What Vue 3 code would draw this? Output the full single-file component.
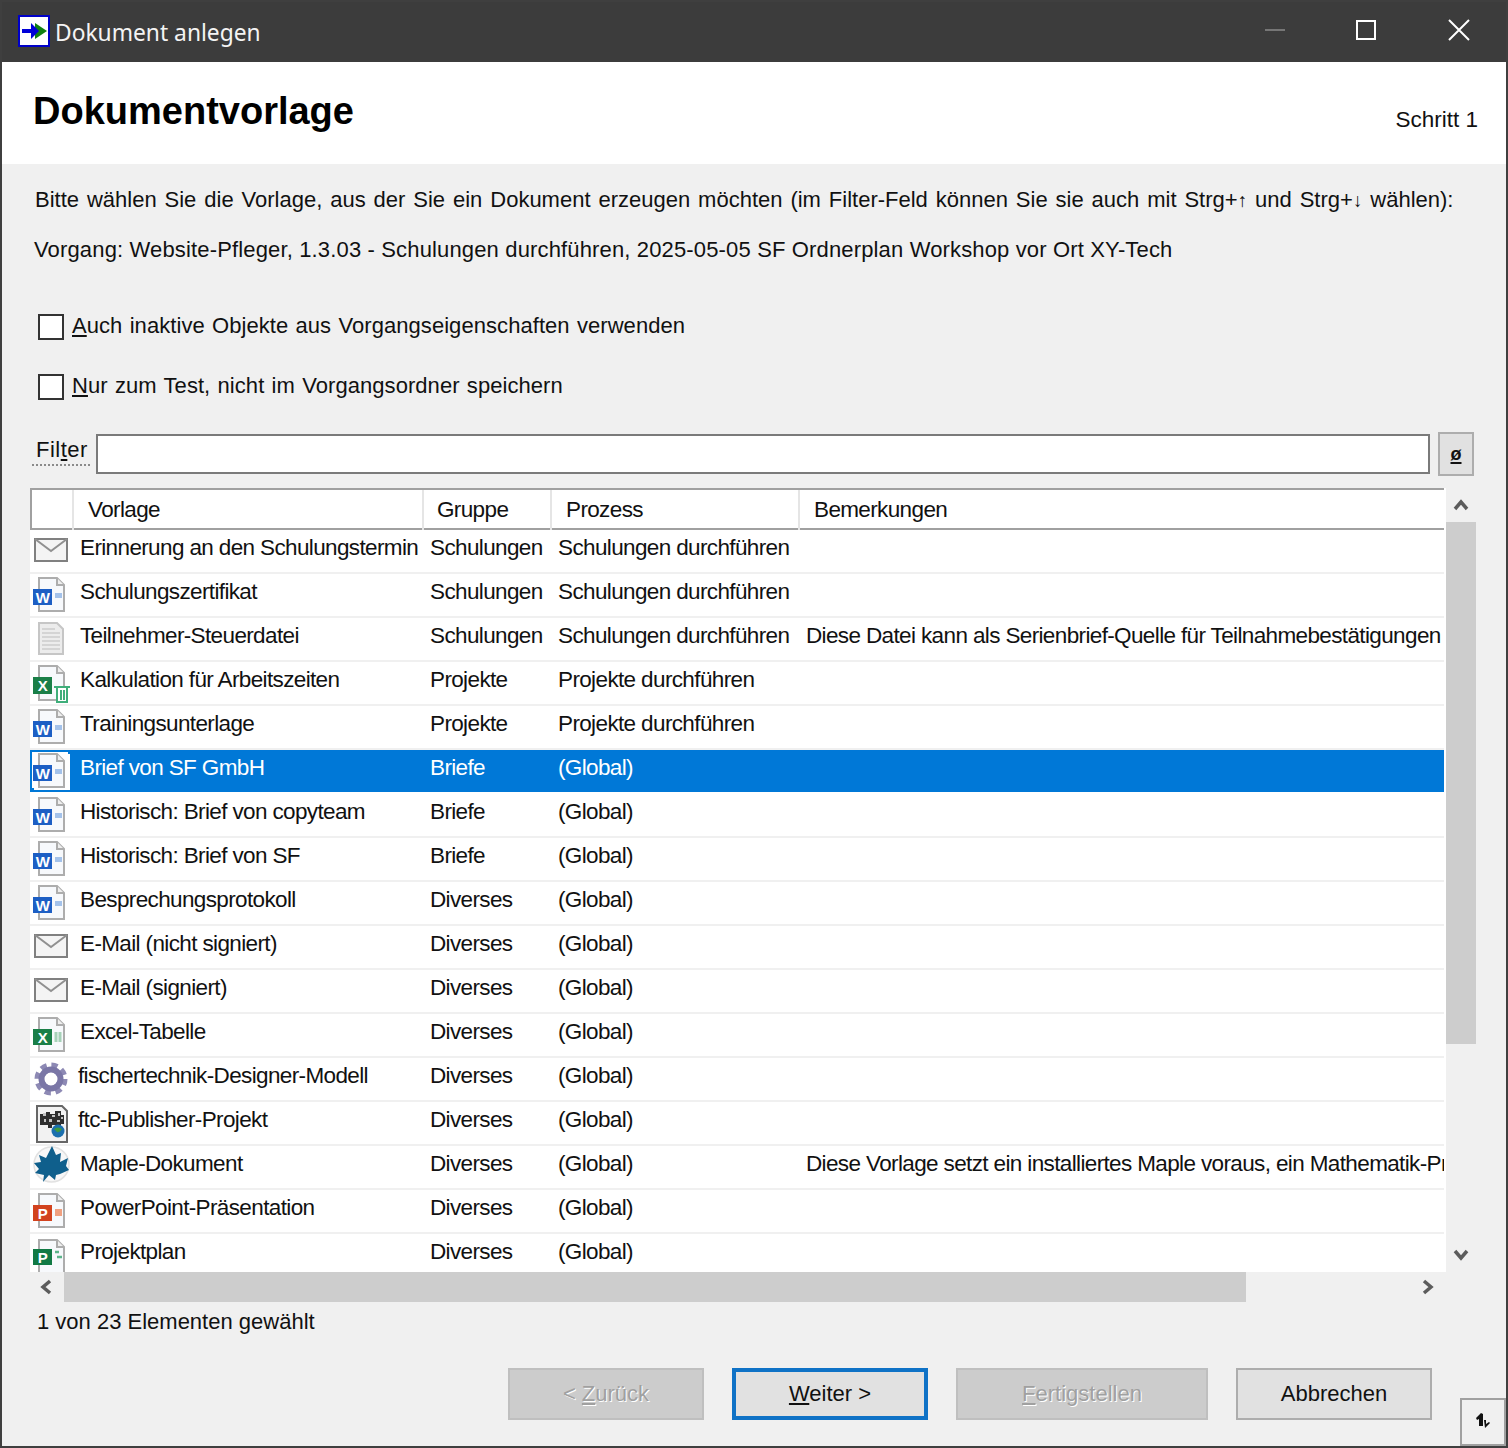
<script setup>
const rows = [
  { icon: 'mail', name: 'Erinnerung an den Schulungstermin', group: 'Schulungen', proc: 'Schulungen durchführen', note: '' },
  { icon: 'word', name: 'Schulungszertifikat', group: 'Schulungen', proc: 'Schulungen durchführen', note: '' },
  { icon: 'plain', name: 'Teilnehmer-Steuerdatei', group: 'Schulungen', proc: 'Schulungen durchführen', note: 'Diese Datei kann als Serienbrief-Quelle für Teilnahmebestätigungen' },
  { icon: 'exceltrash', name: 'Kalkulation für Arbeitszeiten', group: 'Projekte', proc: 'Projekte durchführen', note: '' },
  { icon: 'word', name: 'Trainingsunterlage', group: 'Projekte', proc: 'Projekte durchführen', note: '' },
  { icon: 'word', name: 'Brief von SF GmbH', group: 'Briefe', proc: '(Global)', note: '', selected: true },
  { icon: 'word', name: 'Historisch: Brief von copyteam', group: 'Briefe', proc: '(Global)', note: '' },
  { icon: 'word', name: 'Historisch: Brief von SF', group: 'Briefe', proc: '(Global)', note: '' },
  { icon: 'word', name: 'Besprechungsprotokoll', group: 'Diverses', proc: '(Global)', note: '' },
  { icon: 'mail', name: 'E-Mail (nicht signiert)', group: 'Diverses', proc: '(Global)', note: '' },
  { icon: 'mail', name: 'E-Mail (signiert)', group: 'Diverses', proc: '(Global)', note: '' },
  { icon: 'excel', name: 'Excel-Tabelle', group: 'Diverses', proc: '(Global)', note: '' },
  { icon: 'gear', name: 'fischertechnik-Designer-Modell', group: 'Diverses', proc: '(Global)', note: '', shift: true },
  { icon: 'ftc', name: 'ftc-Publisher-Projekt', group: 'Diverses', proc: '(Global)', note: '', shift: true },
  { icon: 'maple', name: 'Maple-Dokument', group: 'Diverses', proc: '(Global)', note: 'Diese Vorlage setzt ein installiertes Maple voraus, ein Mathematik-Programm' },
  { icon: 'ppt', name: 'PowerPoint-Präsentation', group: 'Diverses', proc: '(Global)', note: '' },
  { icon: 'project', name: 'Projektplan', group: 'Diverses', proc: '(Global)', note: '' }
]
</script>

<template>
  <div class="window">
    <svg class="defs" aria-hidden="true">
      <symbol id="page" viewBox="0 0 36 36">
        <path d="M7 2H25L32 9V35H7Z" fill="#f7f9fc" stroke="#adadad" stroke-width="2" />
        <path d="M25 2V9H32" fill="#eeeeee" stroke="#adadad" stroke-width="2" />
      </symbol>
      <symbol id="word" viewBox="0 0 36 36">
        <use href="#page" width="36" height="36" />
        <rect x="1" y="13" width="19" height="16" fill="#1d5fc4" />
        <text x="10.5" y="27" class="ico-letter" text-anchor="middle">W</text>
        <rect x="23" y="17" width="7" height="5" fill="#a4c2ea" />
      </symbol>
      <symbol id="excel" viewBox="0 0 36 36">
        <use href="#page" width="36" height="36" />
        <rect x="1" y="13" width="19" height="16" fill="#1a7f48" />
        <text x="10.5" y="27" class="ico-letter" text-anchor="middle">X</text>
        <path d="M24 16v10M28 16v10" stroke="#a6d2b8" stroke-width="3" />
      </symbol>
      <symbol id="exceltrash" viewBox="0 0 40 40">
        <path d="M7 2H25L32 9V36H7Z" fill="#f7f9fc" stroke="#adadad" stroke-width="2" />
        <path d="M25 2V9H32" fill="#eeeeee" stroke="#adadad" stroke-width="2" />
        <rect x="1" y="13" width="19" height="17" fill="#1a7f48" />
        <text x="10.5" y="27" class="ico-letter" text-anchor="middle">X</text>
        <path d="M22 23H38M25 24V38H35V24M29 26V36M32 26V36" fill="#fff" stroke="#3fae7a" stroke-width="2" />
      </symbol>
      <symbol id="ppt" viewBox="0 0 36 36">
        <use href="#page" width="36" height="36" />
        <rect x="1" y="13" width="19" height="16" fill="#d2431f" />
        <text x="10.5" y="27" class="ico-letter" text-anchor="middle">P</text>
        <rect x="23" y="17" width="7" height="7" fill="#f0a080" />
      </symbol>
      <symbol id="project" viewBox="0 0 36 36">
        <use href="#page" width="36" height="40" />
        <rect x="1" y="13" width="19" height="16" fill="#117a45" />
        <text x="10.5" y="27" class="ico-letter" text-anchor="middle">P</text>
        <path d="M23 16h4M25 21h5" stroke="#5cb58a" stroke-width="2.5" />
      </symbol>
      <symbol id="mail" viewBox="0 0 36 36">
        <rect x="3" y="7" width="32" height="22" fill="#f4f4f4" stroke="#808080" stroke-width="2" />
        <path d="M3 7L19 19L35 7" fill="none" stroke="#909090" stroke-width="2" />
      </symbol>
      <symbol id="plain" viewBox="0 0 36 36">
        <path d="M7 3H25L31 9V34H7Z" fill="#ececec" stroke="#c6c6c6" stroke-width="2" />
        <path d="M10 9H23M10 13H28M10 17H28M10 21H28M10 25H28M10 29H28" stroke="#d4d4d4" stroke-width="2" />
      </symbol>
      <symbol id="gear" viewBox="0 0 36 36">
        <circle cx="19" cy="19" r="13.5" fill="none" stroke="#8d89b4" stroke-width="6" stroke-dasharray="6 4.6" />
        <circle cx="19" cy="19" r="9.5" fill="none" stroke="#7a76a6" stroke-width="6" />
        <circle cx="19" cy="19" r="6" fill="#fff" />
      </symbol>
      <symbol id="ftc" viewBox="0 0 40 40">
        <path d="M5 2H30L35 7V38H5Z" fill="#f2f2f2" stroke="#666" stroke-width="2" />
        <path d="M8 10h6v-2h4v2h5v-3h6v4h3v9h-3v3h-5v-2h-4v3h-4v-3H8Z" fill="#2e2e2e" />
        <path d="M11 9h3v3h-3ZM20 11h3v2h-3ZM26 9h2v3h-2ZM12 15h2v3h-2ZM17 15h3v3h-3ZM25 16h3v2h-3ZM29 13h2v2h-2Z" fill="#c4c4c4" />
        <circle cx="26" cy="27" r="6.5" fill="#1b6fae" />
        <path d="M22 25q4-3 8 0q-2 4-5 3Z" fill="#3e9a40" />
      </symbol>
      <symbol id="maple" viewBox="0 0 40 40">
        <circle cx="19.5" cy="18.5" r="17.5" fill="#f7f7f7" stroke="#e2e2e2" stroke-width="1.5" />
        <path transform="translate(0 -2)" d="M20 2L24 11L29 9L28 18L36 14L34 22L37 26L28 30L24 31L23 36L17 31L11 38L12 31L3 29L7 25L2 19L9 18L7 11L14 14Z" fill="#0f5f8c" />
      </symbol>
    </svg>

    <div class="titlebar">
      <svg class="app-icon" viewBox="0 0 32 32" aria-hidden="true">
        <rect x="1" y="1" width="30" height="30" fill="#fff" stroke="#0000c8" stroke-width="2" />
        <path d="M17 8L29 16L17 24Z" fill="#108010" />
        <path d="M4 14H13V8L21 16L13 24V18H4Z" fill="#0000d8" />
      </svg>
      <div class="title">Dokument anlegen</div>
      <div class="controls">
        <div class="ctrl"><span class="min"></span></div>
        <div class="ctrl"><span class="max"></span></div>
        <div class="ctrl">
          <svg width="22" height="22" viewBox="0 0 22 22" aria-hidden="true"><path d="M1 1L21 21M21 1L1 21" stroke="#fff" stroke-width="2" /></svg>
        </div>
      </div>
    </div>

    <header class="head">
      <h1>Dokumentvorlage</h1>
      <div class="step">Schritt 1</div>
    </header>

    <main class="content">
      <p class="line line1">Bitte wählen Sie die Vorlage, aus der Sie ein Dokument erzeugen möchten (im Filter-Feld können Sie sie auch mit Strg+<small>↑</small> und Strg+<small>↓</small> wählen):</p>
      <p class="line line2">Vorgang: Website-Pfleger, 1.3.03 - Schulungen durchführen, 2025-05-05 SF Ordnerplan Workshop vor Ort XY-Tech</p>

      <div class="checks">
        <label class="check"><span class="box"></span><span class="check-text"><u>A</u>uch inaktive Objekte aus Vorgangseigenschaften verwenden</span></label>
        <label class="check"><span class="box"></span><span class="check-text"><u>N</u>ur zum Test, nicht im Vorgangsordner speichern</span></label>
      </div>

      <div class="filter-row">
        <div class="filter-label">Fil<u>t</u>er</div>
        <div class="filter-input"></div>
        <div class="filter-btn"><u>ø</u></div>
      </div>

      <div class="list-area">
        <div class="list">
          <div class="head-grid list-head">
            <div class="hcell"></div>
            <div class="hcell">Vorlage</div>
            <div class="hcell second">Gruppe</div>
            <div class="hcell">Prozess</div>
            <div class="hcell last">Bemerkungen</div>
          </div>
          <div v-for="r in rows" :key="r.name" class="row-grid row" :class="{ selected: r.selected }">
            <div class="icon-cell">
              <svg class="row-icon" :class="r.icon" aria-hidden="true"><use :href="'#' + r.icon" width="100%" height="100%" /></svg>
            </div>
            <div class="cell name" :class="{ shift: r.shift }">{{ r.name }}</div>
            <div class="cell">{{ r.group }}</div>
            <div class="cell">{{ r.proc }}</div>
            <div class="cell">{{ r.note }}</div>
          </div>
        </div>
        <div class="vscroll">
          <div class="arrow-v">
            <svg width="16" height="12" viewBox="0 0 16 12" aria-hidden="true"><path d="M2 10L8 3L14 10" fill="none" stroke="#5c5c5c" stroke-width="3.5" /></svg>
          </div>
          <div class="vthumb"></div>
          <div class="grow"></div>
          <div class="arrow-v">
            <svg width="16" height="12" viewBox="0 0 16 12" aria-hidden="true"><path d="M2 2L8 9L14 2" fill="none" stroke="#5c5c5c" stroke-width="3.5" /></svg>
          </div>
        </div>
      </div>

      <div class="hscroll">
        <div class="arrow-h">
          <svg width="12" height="16" viewBox="0 0 12 16" aria-hidden="true"><path d="M10 2L3 8L10 14" fill="none" stroke="#5c5c5c" stroke-width="3.5" /></svg>
        </div>
        <div class="hthumb"></div>
        <div class="grow"></div>
        <div class="arrow-h">
          <svg width="12" height="16" viewBox="0 0 12 16" aria-hidden="true"><path d="M2 2L9 8L2 14" fill="none" stroke="#5c5c5c" stroke-width="3.5" /></svg>
        </div>
      </div>

      <div class="status">1 von 23 Elementen gewählt</div>

      <div class="footer">
        <div class="btn disabled"><span>&lt; <u>Z</u>urück</span></div>
        <div class="btn primary"><span><u>W</u>eiter &gt;</span></div>
        <div class="btn disabled wide"><span><u>F</u>ertigstellen</span></div>
        <div class="btn"><span>Abbrechen</span></div>
        <div class="corner">
          <svg width="18" height="18" viewBox="0 0 16 18" aria-hidden="true"><path d="M1 5L6 0L8 1V13H4V6L2 7ZM9 7H11V11L14 9L15 10L10 15Z" fill="#111" /></svg>
        </div>
      </div>
    </main>
  </div>
</template>

<style scoped>
.window {
  width: 1508px;
  height: 1448px;
  box-sizing: border-box;
  border: 2px solid #3f3f3f;
  display: flex;
  flex-direction: column;
  background: #f0f0f0;
  color: #111;
  font-family: "Liberation Sans", Arial, sans-serif;
  font-size: 22px;
  overflow: hidden;
}
.defs { display: block; width: 0; height: 0; }
.ico-letter { font-family: "Liberation Sans", Arial, sans-serif; font-size: 15px; font-weight: 700; fill: #fff; }
u { text-decoration-thickness: 2px; text-underline-offset: 2px; }

.titlebar {
  height: 60px;
  flex: none;
  display: flex;
  align-items: center;
  background: #3c3c3c;
  padding-left: 16px;
}
.app-icon { width: 32px; height: 32px; flex: none; margin-bottom: 2px; }
.title {
  margin-left: 5px;
  color: #f4f4f4;
  font-family: "Noto Sans", sans-serif;
  font-size: 22.8px;
}
.controls { margin-left: auto; display: flex; height: 100%; padding-right: 1px; }
.ctrl {
  width: 92px;
  display: flex;
  align-items: center;
  justify-content: center;
  padding-bottom: 4px;
}
.min { display: block; width: 20px; height: 2px; background: #767676; }
.max { display: block; width: 20px; height: 20px; box-sizing: border-box; border: 2px solid #fff; margin-right: 2px; }

.head {
  height: 102px;
  flex: none;
  background: #fff;
  display: flex;
  justify-content: space-between;
  padding: 0 28px 0 31px;
}
h1 {
  margin: 28px 0 0;
  font-size: 38px;
  line-height: 42px;
  font-weight: 700;
  color: #000;
}
.step { margin-top: 44px; line-height: 28px; font-size: 22.5px; }

.content { flex: 1; padding-left: 28px; min-height: 0; }
.line { margin: 0; height: 50px; line-height: 50px; white-space: nowrap; padding-left: 4px; }
.line1 { margin-top: 11px; padding-left: 5px; word-spacing: 1.8px; }
.line2 { letter-spacing: 0.15px; }
.line small { font-size: 19px; }

.checks { margin-top: 22px; padding-left: 8px; }
.check { height: 60px; display: flex; align-items: center; gap: 8px; }
.check-text { word-spacing: 1.1px; letter-spacing: 0.06px; padding-bottom: 2px; }
.box {
  width: 26px;
  height: 26px;
  box-sizing: border-box;
  border: 2px solid #333;
  background: #fff;
  flex: none;
}

.filter-row { margin-top: 15px; display: flex; align-items: flex-start; height: 44px; }
.filter-label {
  margin: 2px 0 0 2px;
  width: 58px;
  height: 32px;
  box-sizing: border-box;
  padding: 2px 0 0 4px;
  line-height: 28px;
  letter-spacing: 0.5px;
  border-bottom: 2px dotted #8a8a8a;
}
.filter-input {
  margin: 2px 0 0 6px;
  width: 1334px;
  height: 40px;
  box-sizing: border-box;
  border: 2px solid #7a7a7a;
  background: #fff;
}
.filter-btn {
  margin-left: 8px;
  width: 36px;
  height: 44px;
  box-sizing: border-box;
  border: 2px solid #adadad;
  background: #e1e1e1;
  display: flex;
  align-items: center;
  justify-content: center;
  font-size: 18px;
  font-weight: 700;
}

.list-area { margin-top: 12px; display: flex; height: 784px; }
.list { width: 1416px; background: #fff; overflow: hidden; flex: none; font-size: 22.5px; letter-spacing: -0.63px; }
.row-grid {
  display: grid;
  grid-template-columns: 42px 351px 128px 248px 645px;
}
.head-grid {
  display: grid;
  grid-template-columns: 44px 350px 128px 248px 644px;
}
.list-head {
  height: 42px;
  box-sizing: border-box;
  border-top: 2px solid #a0a0a0;
  border-bottom: 2px solid #a0a0a0;
  background: linear-gradient(#a0a0a0, #a0a0a0) left / 2px 100% no-repeat, #fff;
  width: 1414px;
}
.hcell {
  border-right: 2px solid #e5e5e5;
  padding-left: 14px;
  line-height: 40px;
  white-space: nowrap;
}
.hcell.second { padding-left: 13px; }
.hcell.last { border-right: 0; }
.row {
  height: 44px;
  box-sizing: border-box;
  border-bottom: 2px solid #f0f0f0;
  width: 1414px;
}
.selected { background: #0078d7; color: #fff; border-bottom-color: #fff; }
.cell {
  padding-left: 7px;
  line-height: 36px;
  white-space: nowrap;
  overflow: hidden;
}
.name { padding-left: 8px; }
.name.shift { padding-left: 6px; }
.icon-cell { padding: 2px 0 0 2px; min-width: 0; }
.row-icon { display: block; width: 36px; height: 36px; overflow: visible; }
.row-icon.exceltrash, .row-icon.ftc, .row-icon.maple { width: 40px; height: 40px; }
.row-icon.maple { margin-top: -2px; }
.selected .row-icon { background: #fff; box-shadow: 2px 2px 0 #fff; }

.vscroll { width: 30px; display: flex; flex-direction: column; flex: none; }
.arrow-v { height: 34px; display: flex; align-items: center; justify-content: center; flex: none; }
.vthumb { height: 522px; background: #cdcdcd; flex: none; }
.grow { flex: 1; }

.hscroll { width: 1416px; height: 30px; display: flex; }
.arrow-h { width: 34px; display: flex; align-items: center; justify-content: center; flex: none; box-sizing: border-box; padding-right: 2px; }
.hthumb { width: 1182px; background: #cdcdcd; flex: none; }

.status { height: 40px; line-height: 40px; padding-left: 7px; }

.footer { margin-top: 26px; padding-left: 478px; display: flex; gap: 28px; align-items: flex-start; }
.btn {
  width: 196px;
  height: 52px;
  box-sizing: border-box;
  border: 2px solid #adadad;
  background: #e1e1e1;
  display: flex;
  align-items: center;
  justify-content: center;
}
.btn.wide { width: 252px; }
.btn.disabled {
  background: #cccccc;
  border-color: #bfbfbf;
  color: #a0a0a0;
  text-shadow: 1px 1px 0 #fff;
}
.btn.primary { border: 4px solid #0f72c6; }
.corner {
  width: 46px;
  height: 48px;
  margin-top: 30px;
  box-sizing: border-box;
  border: 2px solid #a0a0a0;
  display: flex;
  align-items: center;
  justify-content: center;
}
</style>
